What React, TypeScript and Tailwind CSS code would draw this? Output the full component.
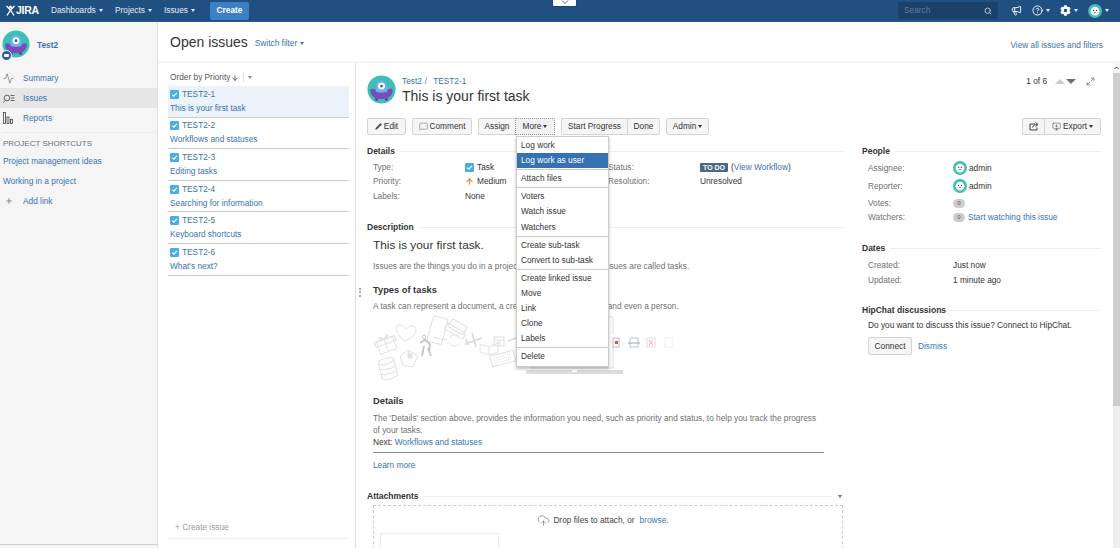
import React from "react";
import { Search, Megaphone, CircleHelp, Pencil, MessageSquare, MonitorDown, ArrowUp, ArrowDown, CloudUpload, Maximize2, Activity, Plus } from "lucide-react";
import { FaCog } from "react-icons/fa";

const Caret = ({ className = "" }: { className?: string }) => (
  <span className={"inline-block w-0 h-0 border-x-[2.5px] border-t-[3px] border-x-transparent border-t-current " + className} />
);

const Check = () => (
  <svg width="9" height="9" viewBox="0 0 9 9" className="shrink-0">
    <rect width="9" height="9" rx="1.2" fill="#4bade8" />
    <path d="M2.2 4.6 L3.9 6.2 L6.9 2.9" stroke="#fff" strokeWidth="1.2" fill="none" />
  </svg>
);

const ProjectAvatar = ({ size }: { size: number }) => (
  <svg width={size} height={size} viewBox="0 0 30 30" className="shrink-0">
    <circle cx="15" cy="15" r="14.5" fill="#3cbfb5" />
    <rect x="8.5" y="24" width="3" height="2.4" fill="#5b3aa0" />
    <rect x="18.5" y="24" width="3" height="2.4" fill="#5b3aa0" />
    <path d="M3.5 16 C3.5 13.5 6 14 8 15 L22 15 C24 14 26.5 13.5 26.5 16 C26.5 22 21 25 15 25 C9 25 3.5 22 3.5 16 Z" fill="#7a4bbd" />
    <path d="M9 17 C9 9 11 5.5 15 5.5 C19 5.5 21 9 21 17 C18 18.5 12 18.5 9 17 Z" fill="#6fb1ec" />
    <circle cx="15" cy="11.5" r="3.6" fill="#fff" />
    <circle cx="15" cy="11.5" r="1.5" fill="#3a5f8f" />
  </svg>
);

const UserAvatar = ({ size }: { size: number }) => (
  <svg width={size} height={size} viewBox="0 0 14 14" className="shrink-0">
    <circle cx="7" cy="7" r="7" fill="#3fbfb7" />
    <circle cx="7" cy="7.2" r="4.4" fill="#fff" />
    <circle cx="5.6" cy="6.4" r=".6" fill="#334" />
    <circle cx="8.4" cy="6.4" r=".6" fill="#334" />
    <path d="M6 8 H8 L7 9.4 Z" fill="#a33" />
  </svg>
);

const SectionHead = ({ title, tail }: { title: string; tail?: React.ReactNode }) => (
  <div className="flex items-center gap-[5px] h-[11px]">
    <span className="font-bold text-[8.5px] text-[#333] whitespace-nowrap">{title}</span>
    <span className="flex-1 h-px bg-[#eeeeee]" />
    {tail}
  </div>
);

const Btn = ({ w, children, className = "" }: { w: number | string; children: React.ReactNode; className?: string }) => (
  <div
    className={"h-[17px] flex items-center justify-center gap-[2px] border border-[#d4d4d4] bg-[#f5f5f5] text-[#333] rounded-[2px] whitespace-nowrap " + className}
    style={{ width: w }}
  >
    {children}
  </div>
);

const MenuGroup = ({ items, active, last }: { items: string[]; active?: string; last?: boolean }) => (
  <div className={"py-px " + (last ? "" : "border-b border-[#cccccc]")}>
    {items.map((t) => (
      <div key={t} className={"h-[15.1px] flex items-center pl-[4px] whitespace-nowrap " + (t === active ? "bg-[#3572b0] text-white" : "text-[#333]")}>
        {t}
      </div>
    ))}
  </div>
);

const Illustration = () => (
  <svg width="300" height="70" viewBox="373 315 300 70" className="block" fill="none" stroke="#e0e0e0" strokeWidth="1">
    <g transform="rotate(-20 386 345)">
      <rect x="378" y="339" width="17" height="13" />
      <path d="M376 339 H397 V344 H376 Z M386 339 V352" />
      <path d="M386 339 C381 333 379 337 386 339 C392 333 394 337 386 339" />
    </g>
    <path d="M404 341 C396 334 394 325 400 325 C403 325 405 327 406 329 C409 325 416 324 416 330 C416 335 410 339 404 341 Z" />
    <rect x="430" y="317" width="15" height="26" rx="1.5" transform="rotate(15 437 330)" />
    <path d="M433 337 L447 340" />
    <g transform="rotate(30 457 327)">
      <rect x="449" y="322" width="17" height="9" rx="2" />
      <rect x="447" y="328" width="21" height="7" rx="2" />
    </g>
    <path d="M420 343 L425 340 L430 344 L429 352 M424 346 L422 356 M428 348 L431 356" stroke="#c8c8c8" strokeWidth="2" />
    <circle cx="424" cy="337" r="1.8" stroke="#c8c8c8" />
    <path d="M449 338 C452 334 458 334 460 338 M449 343 C452 347 458 347 460 343" />
    <path d="M465 344 L482 338 M472 333 L476 347 M466 339 L468 345" stroke="#d8d8d8" strokeWidth="1.6" />
    <path d="M480 344 L489 347 L498 343 L498 352 L489 355 L480 352 Z M489 347 V355" />
    <rect x="494" y="337" width="10" height="9" />
    <path d="M494 340 H504 M497 342 H501 M497 344 H501" />
    <g transform="rotate(-15 503 359)">
      <rect x="491" y="353" width="24" height="11" />
      <path d="M494 356 H512 M494 358.500 H512 M494 361 H512" strokeDasharray="1 1" />
    </g>
    <path d="M508 341 L516 338" stroke="#d8d8d8" strokeWidth="1.6" />
    <path d="M400 356 L408 350 L418 356 L413 367 L403 365 Z M408 350 L410 358" />
    <rect x="408" y="354" width="4" height="4" fill="#e0e0e0" />
    <g transform="rotate(-15 388 369)">
      <ellipse cx="388" cy="361" rx="8" ry="3" />
      <path d="M380 361 V376 C380 380 396 380 396 376 V361 M380 366 C380 370 396 370 396 366 M380 371 C380 375 396 375 396 371" />
    </g>
    <path d="M600 317 H613 V335 M613 347 V368 H530" stroke="#dcdcdc" />
    <rect x="526" y="370" width="97" height="4" fill="#dcdcdc" stroke="none" />
    <rect x="572" y="370" width="5" height="2" fill="#ffffff" stroke="none" />
    <rect x="613" y="338" width="6" height="9" stroke="#bbbbbb" />
    <path d="M615 341 H618 V344 H615 Z" fill="#ee4444" stroke="none" />
    <rect x="630" y="338" width="8" height="9" stroke="#b9c5d6" />
    <path d="M628 343 H640" stroke="#8ea6c4" />
    <rect x="647" y="338" width="8" height="9" stroke="#f0d8d8" />
    <path d="M649 340 L653 345 M653 340 L649 345" stroke="#eeaaaa" />
    <rect x="665" y="338" width="8" height="9" stroke="#eeeeee" />
  </svg>
);

export default function App() {
  const issues = [
    ["TEST2-1", "This is your first task"],
    ["TEST2-2", "Workflows and statuses"],
    ["TEST2-3", "Editing tasks"],
    ["TEST2-4", "Searching for information"],
    ["TEST2-5", "Keyboard shortcuts"],
    ["TEST2-6", "What's next?"],
  ];
  const link = "text-[#3b73af]";
  const muted = "text-[#707070]";
  return (
    <div className="relative w-[1120px] h-[548px] overflow-hidden flex flex-col bg-white text-[8.3px] leading-[11px] text-[#333] font-['Liberation_Sans',Arial,sans-serif]">
      {/* header */}
      <header className="h-[22px] shrink-0 bg-[#205081] flex items-center text-[#e6edf5] border-b border-[#2a5a8c]">
        <div className="w-[51px] pl-[6px] flex items-center text-white font-bold text-[10.5px] tracking-[-0.3px]">
          <svg width="9" height="11" viewBox="0 0 9 11" className="mr-px">
            <circle cx="4.500" cy="2" r="1.500" fill="#fff" />
            <path d="M.5 1 L4.500 5 L8.500 1 M4.500 5 L1 10.500 M4.500 5 L8 10.500" stroke="#fff" strokeWidth="1.300" fill="none" />
          </svg>
          JIRA
        </div>
        <div className="w-[64px] flex items-center gap-[3px]">Dashboards <Caret /></div>
        <div className="w-[49px] flex items-center gap-[3px]">Projects <Caret /></div>
        <div className="w-[46px] flex items-center gap-[3px]">Issues <Caret /></div>
        <div className="w-[39px] h-[18px] bg-[#3b7fc4] rounded-[2px] flex items-center justify-center text-white font-bold">Create</div>
        <div className="flex-1" />
        <div className="w-[100px] h-[17px] bg-[#1b4069] rounded-[2px] flex items-center justify-between pl-[6px] pr-[6px] text-[#5f7d9c]">
          Search
          <Search size={8} strokeWidth={3} className="text-[#b8c7d8]" />
        </div>
        <Megaphone size={11} strokeWidth={2} className="ml-[13px] text-white" />
        <div className="ml-[10px] flex items-center gap-[3px]">
          <CircleHelp size={11} strokeWidth={2} className="text-white" />
          <Caret />
        </div>
        <div className="ml-[10px] flex items-center gap-[3px]">
          <FaCog size={11} className="text-white" />
          <Caret />
        </div>
        <div className="ml-[10px] mr-[11px] flex items-center gap-[3px]">
          <UserAvatar size={14} />
          <Caret />
        </div>
      </header>

      {/* collapsed top tab */}
      <div className="absolute left-[553px] top-0 w-[23px] h-[6px] bg-white rounded-b-[1px] flex justify-center shadow-[0_0_2px_rgba(0,0,0,0.3)]">
        <svg width="8" height="5" viewBox="0 0 8 5"><path d="M1 .5 L4 3.500 L7 .5" stroke="#666" fill="none" /></svg>
      </div>

      <div className="flex flex-1 min-h-0">
        {/* sidebar */}
        <aside className="w-[158px] shrink-0 bg-[#f5f5f5] border-r border-[#e0e0e0] flex flex-col">
          <div className="h-[46px] pt-[8px] pl-[2px] flex items-start relative">
            <ProjectAvatar size={28} />
            <span className={"ml-[7px] mt-[10px] font-bold " + link}>Test2</span>
            <div className="absolute left-[1px] top-[28px] w-[11px] h-[11px] rounded-full bg-[#2a6296] border border-white flex items-center justify-center">
              <span className="w-[5px] h-[3px] bg-white rounded-[1px]" />
            </div>
          </div>
          <div className={"h-[20px] flex items-center pl-[23px] relative " + link}>
            <Activity size={11} strokeWidth={1} className="absolute left-[3px] text-[#333]" />
            Summary
          </div>
          <div className={"h-[20px] flex items-center pl-[23px] relative bg-[#e6e6e6] " + link}>
            <svg width="12" height="9" viewBox="0 0 12 9" className="absolute left-[3px]" fill="none" stroke="#444" strokeWidth=".8">
              <circle cx="4" cy="4" r="2.800" />
              <path d="M2 6.500 L.5 8.500 M7.500 1.500 H11.500 M8 4 H11.500 M7.500 6.500 H11.500" />
            </svg>
            Issues
          </div>
          <div className={"h-[20px] flex items-center pl-[23px] relative " + link}>
            <svg width="10" height="12" viewBox="0 0 10 12" className="absolute left-[3px]" fill="none" stroke="#444" strokeWidth=".8">
              <rect x=".5" y=".5" width="2" height="11" />
              <rect x="4" y="5" width="2" height="6.500" />
              <rect x="7.500" y="7.500" width="2" height="4" />
            </svg>
            Reports
          </div>
          <div className="mx-[2px] mt-[4px] h-px bg-[#ebebeb]" />
          <div className="pl-[3px] mt-[5px] h-[11px] text-[#707070] text-[8px] whitespace-nowrap">PROJECT SHORTCUTS</div>
          <div className={"pl-[3px] h-[20px] mt-[2px] flex items-center " + link}>Project management ideas</div>
          <div className={"pl-[3px] h-[20px] flex items-center " + link}>Working in a project</div>
          <div className={"h-[20px] flex items-center pl-[23px] relative " + link}>
            <Plus size={8} strokeWidth={2} className="absolute left-[5px] text-[#555]" />
            Add link
          </div>
          <div className="flex-1" />
          <div className="h-[4px] border-t border-[#cccccc]" />
        </aside>

        {/* main */}
        <main className="flex-1 min-w-0 flex flex-col">
          <div className="h-[41px] shrink-0 border-b-2 border-[#f5f5f5] flex items-center pl-[12px] pr-[17px]">
            <span className="text-[14px] leading-[18px] text-[#333]">Open issues</span>
            <span className={"ml-[7px] mt-[4px] flex items-center gap-[3px] " + link}>Switch filter <Caret /></span>
            <span className="flex-1" />
            <span className={"mt-[8px] " + link}>View all issues and filters</span>
          </div>
          <div className="flex flex-1 min-h-0">
            {/* issue list */}
            <section className="relative w-[198px] shrink-0 border-r border-[#dddddd] pl-[10px] pr-[6px] flex flex-col">
              <div className="h-[23px] pt-[6px] flex items-center pl-[2px] text-[#555]">
                Order by Priority
                <ArrowDown size={8} strokeWidth={2.5} className="ml-px text-[#444]" />
                <span className="w-px h-[9px] bg-[#ddd] mx-[4px]" />
                <Caret className="text-[#888]" />
              </div>
              {issues.map(([k, t], i) => (
                <div key={k} className={"h-[31.6px] border-b border-[#cccccc] pl-[2px] flex flex-col justify-center gap-[3px] " + (i === 0 ? "bg-[#ebf2f9]" : "")}>
                  <div className="flex items-center gap-[3px]">
                    <Check />
                    <span className={link}>{k}</span>
                  </div>
                  <div className={link}>{t}</div>
                </div>
              ))}
              <div className="flex-1" />
              <div className="h-[25px] pt-[3px] border-b border-[#eeeeee] flex items-center pl-[7px] text-[#999]">+ Create issue</div>
              <div className="h-[9px]" />
              <div className="absolute left-[201px] top-[225px] w-[2px] h-[9px] border-l-2 border-dotted border-[#aaa]" />
            </section>

            {/* detail */}
            <section className="relative flex-1 min-w-0 overflow-hidden pl-[11px] pr-[12px]">
              <div className="h-[47px] pt-[12px] flex items-start">
                <ProjectAvatar size={29} />
                <div className="ml-[6px] mt-[1px] flex flex-col">
                  <div className="h-[11px] flex gap-[3px] text-[#707070]">
                    <span className={link}>Test2</span> / <span className={"ml-[3px] " + link}>TEST2-1</span>
                  </div>
                  <div className="text-[14px] leading-[18px] text-[#333]">This is your first task</div>
                </div>
                <div className="flex-1" />
                <div className="flex items-center mt-[1px] mr-[6px]">
                  1 of 6
                  <span className="ml-[8px] w-0 h-0 border-x-[5px] border-b-[5px] border-x-transparent border-b-[#ccc]" />
                  <span className="ml-px w-0 h-0 border-x-[5px] border-t-[5px] border-x-transparent border-t-[#707070]" />
                  <Maximize2 size={9} strokeWidth={1.6} className="ml-[10px] text-[#446]" />
                </div>
              </div>

              <div className="h-[17px] mt-[8px] flex items-center">
                <Btn w={39}><Pencil size={7} fill="#555" strokeWidth={1} />Edit</Btn>
                <Btn w={60} className="ml-[6px]"><MessageSquare size={9} strokeWidth={1} />Comment</Btn>
                <Btn w={37} className="ml-[6px] rounded-r-none border-r-0">Assign</Btn>
                <Btn w={40} className="rounded-none bg-[#f0f0f0]! border-[#999]! border-dotted">More <Caret /></Btn>
                <Btn w={66} className="ml-[6px] rounded-r-none border-r-0">Start Progress</Btn>
                <Btn w={33} className="rounded-l-none">Done</Btn>
                <Btn w={43} className="ml-[6px]">Admin <Caret /></Btn>
                <div className="flex-1" />
                <Btn w={22} className="rounded-r-none border-r-0">
                  <svg width="10" height="9" viewBox="0 0 10 9" fill="none" stroke="#444" strokeWidth="1">
                    <path d="M6 2 H1 V8 H8 V5.500" />
                    <path d="M3.500 5.500 C4 3.500 6 2.500 8 2.500 M6.500 .5 L9 2.500 L6.500 4.500" />
                  </svg>
                </Btn>
                <Btn w={57} className="rounded-l-none"><MonitorDown size={9} strokeWidth={1.2} />Export <Caret /></Btn>
              </div>

              <div className="flex gap-[19px] mt-[11px]">
                <div className="w-[476px] shrink-0">
                  <SectionHead title="Details" />
                  <div className="mt-[3px] pl-[6px] grid grid-cols-[92px_143px_92px_1fr] auto-rows-[14.5px] items-center">
                    <span className={muted}>Type:</span>
                    <span className="flex items-center gap-[3px]"><Check />Task</span>
                    <span className={muted}>Status:</span>
                    <span className="flex items-center gap-[3px] whitespace-nowrap">
                      <span className="h-[9px] px-[3px] bg-[#4a6785] text-white font-bold text-[7px] rounded-[1px] flex items-center">TO DO</span>
                      <span>(<span className={link}>View Workflow</span>)</span>
                    </span>
                    <span className={muted}>Priority:</span>
                    <span className="flex items-center gap-[3px]"><ArrowUp size={9} strokeWidth={3} className="text-[#e59138]" />Medium</span>
                    <span className={muted}>Resolution:</span>
                    <span>Unresolved</span>
                    <span className={muted}>Labels:</span>
                    <span>None</span>
                  </div>

                  <div className="mt-[18px]"><SectionHead title="Description" /></div>
                  <div className="pl-[6px]">
                    <div className="text-[11.8px] leading-[14px] mt-[5px] text-[#333]">This is your first task.</div>
                    <div className={"mt-[9px] whitespace-nowrap " + muted}>Issues are the things you do in a project. In your Test2 project, issues are called tasks.</div>
                    <div className="font-bold text-[9.3px] leading-[12px] mt-[12px]">Types of tasks</div>
                    <div className={"mt-[5px] whitespace-nowrap " + muted}>A task can represent a document, a creative concept, a product and even a person.</div>
                    <div className="mt-[3px] h-[70px] w-[300px]"><Illustration /></div>
                    <div className="font-bold text-[9.3px] mt-[11px]">Details</div>
                    <div className={"mt-[5px] leading-[12px] pr-[22px] " + muted}>The 'Details' section above, provides the information you need, such as priority and status, to help you track the progress of your tasks.</div>
                    <div className="leading-[12px]">Next: <span className={link}>Workflows and statuses</span></div>
                    <div className="h-px bg-[#888] mt-[4px] mr-[19px]" />
                    <div className={"mt-[7px] " + link}>Learn more</div>
                  </div>
                  <div className="mt-[20px]">
                    <SectionHead title="Attachments" tail={<Caret className="text-[#707070] ml-[1px] mr-[1px]" />} />
                  </div>
                  <div className="ml-[6px] mt-[3px] h-[60px] border border-dashed border-[#cccccc] pt-[9px] pl-[6px]">
                    <div className="flex items-center justify-center gap-[3px] h-[11px] text-[#444] pr-[16px]">
                      <CloudUpload size={13} strokeWidth={1} className="text-[#555]" />
                      Drop files to attach, or <span className={"ml-[2px] " + link}>browse.</span>
                    </div>
                    <div className="mt-[7px] w-[119px] h-[40px] border border-[#eeeeee]" />
                  </div>
                </div>

                <div className="flex-1 min-w-0">
                  <SectionHead title="People" />
                  <div className="pl-[6px] mt-[2px] grid grid-cols-[85px_1fr] items-center">
                    <span className={"h-[18px] flex items-center " + muted}>Assignee:</span>
                    <span className="flex items-center gap-[2px]"><UserAvatar size={14} />admin</span>
                    <span className={"h-[18px] flex items-center " + muted}>Reporter:</span>
                    <span className="flex items-center gap-[2px]"><UserAvatar size={14} />admin</span>
                    <span className={"h-[16px] flex items-center " + muted}>Votes:</span>
                    <span className="flex items-center"><span className="inline-flex w-[12px] h-[9px] rounded-full bg-[#cccccc] items-center justify-center text-[6px] text-[#555]">0</span></span>
                    <span className={"h-[13px] flex items-center " + muted}>Watchers:</span>
                    <span className="flex items-center gap-[3px] whitespace-nowrap"><span className="inline-flex w-[12px] h-[9px] rounded-full bg-[#cccccc] items-center justify-center text-[6px] text-[#555]">0</span><span className={link}>Start watching this issue</span></span>
                  </div>
                  <div className="mt-[19px]"><SectionHead title="Dates" /></div>
                  <div className="pl-[6px] mt-[4px] grid grid-cols-[85px_1fr] auto-rows-[15px] items-center">
                    <span className={muted}>Created:</span>
                    <span>Just now</span>
                    <span className={muted}>Updated:</span>
                    <span>1 minute ago</span>
                  </div>
                  <div className="mt-[17px]"><SectionHead title="HipChat discussions" /></div>
                  <div className="pl-[6px] mt-[4px] whitespace-nowrap">Do you want to discuss this issue? Connect to HipChat.</div>
                  <div className="pl-[6px] mt-[6px] flex items-center gap-[6px]">
                    <Btn w={44} className="h-[18px]!">Connect</Btn>
                    <span className={link}>Dismiss</span>
                  </div>
                </div>
              </div>

              {/* dropdown */}
              <div className="absolute left-[160px] top-[73px] w-[93px] h-[231px] bg-white border border-[#cccccc] shadow-[0_2px_3px_rgba(0,0,0,0.25)]">
                <MenuGroup items={["Log work", "Log work as user"]} active="Log work as user" />
                <MenuGroup items={["Attach files"]} />
                <MenuGroup items={["Voters", "Watch issue", "Watchers"]} />
                <MenuGroup items={["Create sub-task", "Convert to sub-task"]} />
                <MenuGroup items={["Create linked issue", "Move", "Link", "Clone", "Labels"]} />
                <MenuGroup items={["Delete"]} last />
              </div>
            </section>

            {/* scrollbar */}
            <div className="w-[7px] shrink-0 flex flex-col bg-[#eeeeee]">
              <div className="h-[10px] bg-[#f5f5f5] flex items-center justify-center">
                <svg width="5" height="4" viewBox="0 0 5 4"><path d="M.5 3 L2.500 1 L4.500 3" stroke="#444" fill="none" /></svg>
              </div>
              <div className="h-[333px] bg-[#cdcdcd]" />
            </div>
          </div>
        </main>
      </div>
    </div>
  );
}
